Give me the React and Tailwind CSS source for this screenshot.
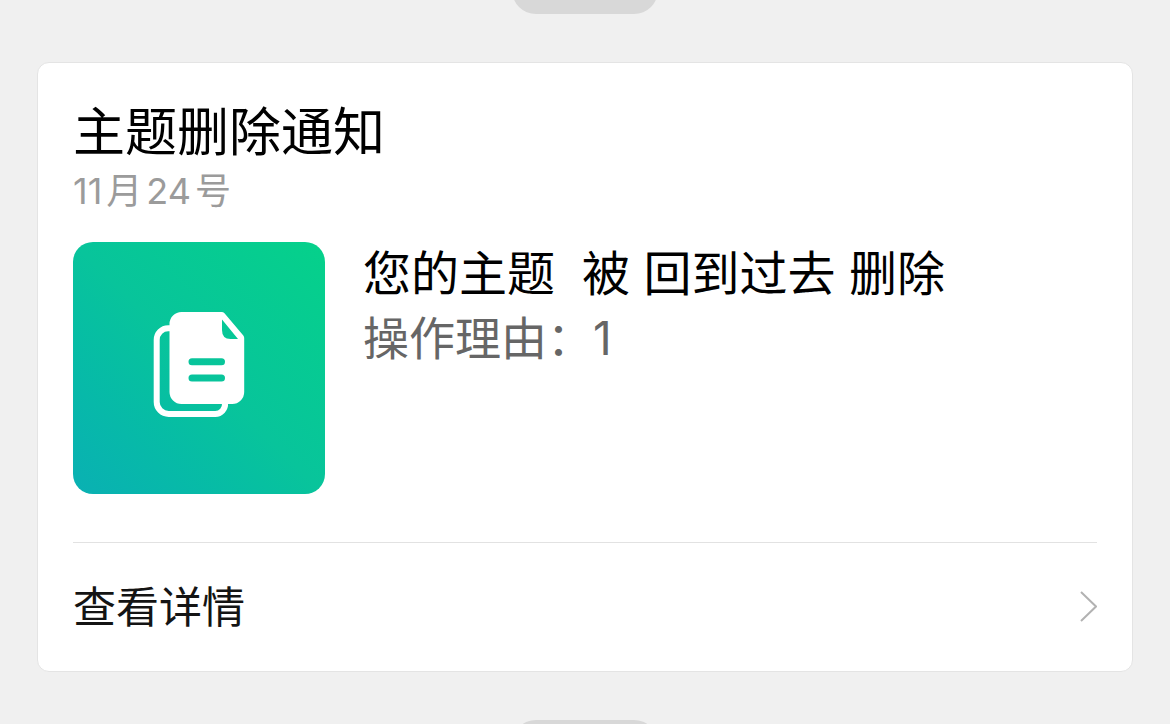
const notice = {
  title: '主题删除通知',
  month: 11,
  day: 24,
  content: '您的主题  被 回到过去 删除',
  reason: '操作理由：1',
};

function DocumentsIcon() {
  return (
    <svg viewBox="0 0 92 112" className="w-[92px] h-28" fill="none" aria-hidden="true">
      {/* back sheet */}
      <path
        d="M19 16.2h-3.5A11.500 11.500 0 0 0 3.700 28v62a12 12 0 0 0 12 12h46.500A10 10 0 0 0 72 91"
        stroke="#fff"
        strokeWidth="6"
      />
      {/* front sheet with folded corner and two lines */}
      <path
        fill="#fff"
        fillRule="evenodd"
        d="M28.500 0h40a4 4 0 0 1 3 1.300L90.300 23.500a4 4 0 0 1 .9 2.600V80a12 12 0 0 1-12 12H28.500a12 12 0 0 1-12-12V12A12 12 0 0 1 28.500 0zM69 7.500V18q0 9 8.500 9H85zM39 46.200a3.500 3.500 0 0 0 0 7h29.500a3.500 3.500 0 0 0 0-7zM39 62.400a3.500 3.500 0 0 0 0 7h29.500a3.500 3.500 0 0 0 0-7z"
      />
    </svg>
  );
}

function ArrowIcon() {
  return (
    <svg viewBox="0 0 18 32" className="w-[18px] h-8" fill="none" aria-hidden="true">
      <path d="M2 1L17 15.500L2 30" stroke="#b2b2b2" strokeWidth="2" />
    </svg>
  );
}

function App() {
  return (
    <div className="min-h-screen flex flex-col bg-[#f0f0f0] font-['Inter','Noto_Sans_CJK_SC',sans-serif]">
      {/* previous time label, scrolled away */}
      <div className="h-3.5 overflow-hidden flex justify-center items-end">
        <div className="w-[146px] h-12 shrink-0 rounded-3xl bg-[#d8d8d8]" />
      </div>

      <main className="mx-[37px] my-12 px-[35px] bg-white border border-[#e4e4e4] rounded-xl">
        <header className="pt-[38px]">
          <h1 className="text-[52px] leading-[64px] text-black">{notice.title}</h1>
          <p className="text-[36px] leading-[52px] text-[#9b9b9b]">
            <span className="mr-1">{notice.month}</span>月<span className="mx-1">{notice.day}</span>号
          </p>
        </header>

        <section className="mt-[25px] pb-12 flex items-start gap-[38px] border-b border-[#e2e2e2]">
          <div className="w-[252px] h-[252px] shrink-0 rounded-[20px] flex items-center justify-center bg-linear-to-tr from-[#0ab0b3] via-[#08c49b] to-[#06d18a]">
            <DocumentsIcon />
          </div>
          <div className="min-w-0">
            <p className="text-[48px] leading-[64px] text-black whitespace-pre-wrap">{notice.content}</p>
            <p className="text-[46px] leading-[64px] text-[#666666]">{notice.reason}</p>
          </div>
        </section>

        <a href="#detail" className="h-32 flex items-center justify-between text-[43px] text-[#141414]">
          查看详情
          <ArrowIcon />
        </a>
      </main>

      <div className="h-1 overflow-hidden flex justify-center items-start">
        <div className="w-[146px] h-12 shrink-0 rounded-3xl bg-[#d8d8d8]" />
      </div>
    </div>
  );
}

export default App;
